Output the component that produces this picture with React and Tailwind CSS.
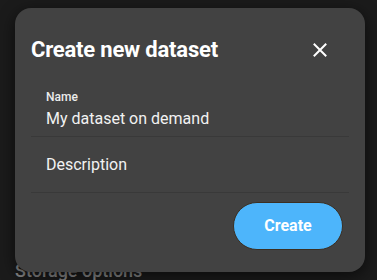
import React from "react";

export default function App() {
  return (
    <div
      className="relative w-[377px] h-[280px] overflow-hidden bg-[#1b1b1b]"
      style={{ fontFamily: "Roboto, 'Liberation Sans', sans-serif" }}
    >
      <div className="pt-[257px] pl-[15px]">
        <h2 className="text-[18px] leading-[28px] font-medium text-[#8a8a8a]">Storage options</h2>
      </div>

      <div className="absolute left-[15px] top-[8px] w-[350px] h-[264px] rounded-[16px] bg-[#424242] shadow-[0_4px_16px_rgba(0,0,0,0.6)] flex flex-col px-[16px]">
        <div className="flex items-center justify-between mt-[26px] h-[32px]">
          <h1 className="text-[22px] leading-[32px] font-bold text-white tracking-[-0.2px]">Create new dataset</h1>
          <button className="w-[40px] h-[40px] flex items-center justify-center mr-[9px] text-white">
            <svg width="14" height="14" viewBox="0 0 14 14" fill="none">
              <path d="M1.5 1.5L12.5 12.5M12.5 1.5L1.5 12.5" stroke="white" strokeWidth="2" strokeLinecap="square" />
            </svg>
          </button>
        </div>

        <div className="mt-[15px] flex flex-col">
          <div className="h-[56px] pl-[15px] pt-[8px] border-b border-[#393939]">
            <div className="text-[12px] leading-[16px] font-medium text-[#ececec]">Name</div>
            <div className="text-[16px] leading-[24px] text-[#f2f2f2] mt-[1.5px]">My dataset on demand</div>
          </div>
          <div className="h-[56px] pl-[15px] flex items-center border-b border-[#393939]">
            <div className="text-[16px] leading-[24px] text-[#f2f2f2]">Description</div>
          </div>
        </div>

        <div className="flex justify-end mt-[9px] pr-[6px]">
          <button className="w-[110px] h-[48px] rounded-full bg-[#4db5fb] border border-[#3b2f22] text-white text-[16px] font-bold">
            Create
          </button>
        </div>
      </div>
    </div>
  );
}
